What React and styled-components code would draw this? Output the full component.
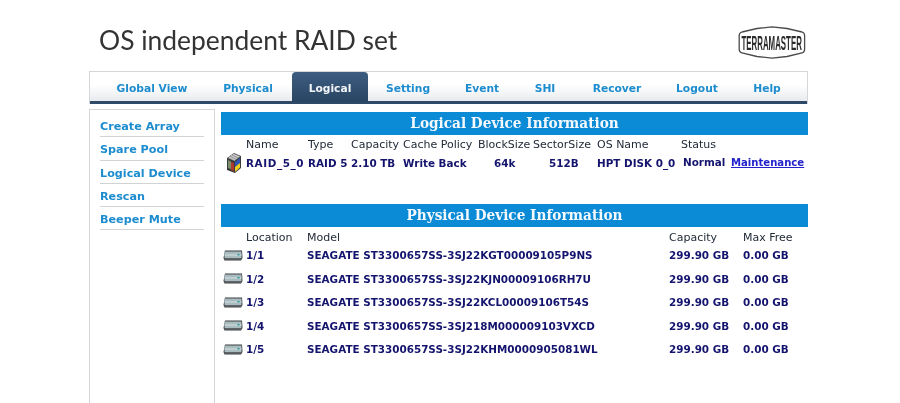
import * as React from 'react';
import styled, { createGlobalStyle } from 'styled-components';

const tabs = [
  { label: 'Global View', width: 104 },
  { label: 'Physical', width: 88 },
  { label: 'Logical', width: 76, active: true },
  { label: 'Setting', width: 80 },
  { label: 'Event', width: 68 },
  { label: 'SHI', width: 58 },
  { label: 'Recover', width: 86 },
  { label: 'Logout', width: 74 },
  { label: 'Help', width: 66 },
];

const menu = ['Create Array', 'Spare Pool', 'Logical Device', 'Rescan', 'Beeper Mute'];

const disks = [
  { loc: '1/1', model: 'SEAGATE ST3300657SS-3SJ22KGT00009105P9NS' },
  { loc: '1/2', model: 'SEAGATE ST3300657SS-3SJ22KJN00009106RH7U' },
  { loc: '1/3', model: 'SEAGATE ST3300657SS-3SJ22KCL00009106T54S' },
  { loc: '1/4', model: 'SEAGATE ST3300657SS-3SJ218M000009103VXCD' },
  { loc: '1/5', model: 'SEAGATE ST3300657SS-3SJ22KHM0000905081WL' },
];

const ArrayIcon = () => (
  <svg width="16" height="22" viewBox="0 0 16 22">
    <path d="M1 6 L8 1 L15 4 L15 16 L9 21 L1 18 Z" fill="#3a3a3a" />
    <path d="M1.5 6 L8 1.5 L14.5 4.2 L8.5 9 Z" fill="#9a9a9a" />
    <path d="M3 5 L9 8 M5 3.6 L11 6.6 M7 2.4 L13 5" stroke="#e4e4e4" strokeWidth="0.8" />
    <path d="M2 8 L5 9.5 L5 17 L2 16 Z" fill="#7d8f6a" />
    <path d="M5 10 L8 11 L8 19 L5 18 Z" fill="#b03a2e" />
    <path d="M9 10 L14 6 L14 11 L9 15 Z" fill="#2f55b8" />
    <path d="M9 15 L14 11 L14 15.5 L9 20 Z" fill="#f0d020" />
  </svg>
);

const DiskIcon = () => (
  <svg width="20" height="11" viewBox="0 0 20 11">
    <path d="M2 0.5 H19 L19.5 8 L18 10.5 H1.5 L0.5 8 Z" fill="#3c3f40" />
    <rect x="1.5" y="1.5" width="17" height="6.5" fill="#a9bcc0" />
    <rect x="1.5" y="4.5" width="17" height="1" fill="#d5e0e2" />
    <rect x="14.5" y="4" width="2" height="1.4" fill="#1f9a9a" />
    <rect x="1.5" y="8.3" width="17" height="1.2" fill="#70767a" />
  </svg>
);

const Logo = () => (
  <svg width="68" height="33" viewBox="0 0 68 33">
    <path
      d="M19 2.5 L34 0.8 L49 2.5 L64 6 Q66.6 6.8 66.6 9.5 V23.5 Q66.6 26 64 27 L49 30.5 L34 32.2 L19 30.5 L4 27 Q1.2 26 1.2 23.5 V9.5 Q1.2 6.8 4 6 Z"
      fill="#fff"
      stroke="#4a4a4a"
      strokeWidth="1.3"
    />
    <text
      transform="translate(3.5,24) scale(0.375,1)"
      fontFamily="'Liberation Sans', sans-serif"
      fontWeight="700"
      fontSize="21"
      fill="#2a2a2a"
    >
      TERRAMASTER
    </text>
  </svg>
);

export default function App() {
  return (
    <Page>
      <GlobalStyle />
      <Header>
        <Title>OS independent RAID set</Title>
        <Logo />
      </Header>
      <TabBar>
        {tabs.map((t) => (
          <Tab key={t.label} $width={t.width} $active={t.active}>
            {t.label}
          </Tab>
        ))}
      </TabBar>
      <Body>
        <Sidebar>
          {menu.map((m) => (
            <MenuItem key={m}>{m}</MenuItem>
          ))}
        </Sidebar>
        <Content>
          <SectionBar>Logical Device Information</SectionBar>
          <LogicalHead>
            <span />
            <span>Name</span>
            <span>Type</span>
            <span>Capacity</span>
            <span>Cache Policy</span>
            <span>BlockSize</span>
            <span>SectorSize</span>
            <span>OS Name</span>
            <span>Status</span>
            <span />
          </LogicalHead>
          <LogicalRow>
            <ArrayIcon />
            <RaidName>RAID_5_0</RaidName>
            <span>RAID 5</span>
            <span>2.10 TB</span>
            <span>Write Back</span>
            <Cell $left={16}>64k</Cell>
            <Cell $left={16}>512B</Cell>
            <span>HPT DISK 0_0</span>
            <Cell $left={2} $raise>Normal</Cell>
            <MaintLink href="#">Maintenance</MaintLink>
          </LogicalRow>
          <SectionBar $gap={30}>Physical Device Information</SectionBar>
          <PhysicalHead>
            <span />
            <span>Location</span>
            <span>Model</span>
            <span>Capacity</span>
            <span>Max Free</span>
          </PhysicalHead>
          {disks.map((d) => (
            <PhysicalRow key={d.loc}>
              <DiskIcon />
              <span>{d.loc}</span>
              <span>{d.model}</span>
              <span>299.90 GB</span>
              <span>0.00 GB</span>
            </PhysicalRow>
          ))}
        </Content>
      </Body>
    </Page>
  );
}

const GlobalStyle = createGlobalStyle`
  html, body { margin: 0; padding: 0; background: #fff; }
`;

const Page = styled.div`
  width: 900px;
  height: 403px;
  overflow: hidden;
  padding-left: 89px;
  box-sizing: border-box;
  font-family: "DejaVu Sans", Verdana, sans-serif;
  filter: blur(0.3px);
`;

const Header = styled.div`
  display: flex;
  align-items: flex-start;
  justify-content: space-between;
  width: 717px;
  height: 71px;
  padding-top: 26px;
  padding-left: 10px;
  box-sizing: border-box;
`;

const Title = styled.h1`
  margin: -3px 0 0;
  font-family: "Lato", "Open Sans", sans-serif;
  font-size: 26.4px;
  font-weight: 400;
  line-height: 34px;
  color: #333;
`;

const TabBar = styled.div`
  display: flex;
  width: 719px;
  height: 33px;
  box-sizing: border-box;
  padding-left: 10px;
  border: 1px solid #d4d6d9;
  border-bottom: 0;
  box-shadow: inset 0 -3px 0 #2f4a68;
  background: linear-gradient(#ffffff 40%, #e8ebee 90%);
`;

const Tab = styled.div`
  flex: none;
  display: flex;
  align-items: center;
  justify-content: center;
  width: ${(p) => p.$width}px;
  height: 30px;
  padding-top: 2px;
  box-sizing: border-box;
  font-size: 10.7px;
  font-weight: 700;
  color: ${(p) => (p.$active ? '#f2f5f8' : '#1c8ccf')};
  background: ${(p) => (p.$active ? 'linear-gradient(#3d5d80, #2a4563)' : 'none')};
  border-radius: ${(p) => (p.$active ? '4px 4px 0 0' : '0')};
`;

const Body = styled.div`
  display: flex;
  margin-top: 5px;
  width: 719px;
  align-items: flex-start;
`;

const Sidebar = styled.div`
  flex: none;
  width: 126px;
  height: 300px;
  box-sizing: border-box;
  padding: 4px 10px 0 10px;
  border: 1px solid #d4d6d9;
  border-bottom: 0;
`;

const MenuItem = styled.div`
  height: 23.3px;
  box-sizing: border-box;
  padding-top: 2px;
  line-height: 22px;
  font-size: 11.2px;
  font-weight: 700;
  color: #1c8ccf;
  white-space: nowrap;
  border-bottom: 1px solid #d0d2d4;
`;

const Content = styled.div`
  flex: none;
  width: 587px;
  margin-left: 6px;
  padding-top: 2.5px;
`;

const SectionBar = styled.div`
  height: 23px;
  margin-top: ${(p) => p.$gap || 0}px;
  background: #0b8ad6;
  color: #f4f9fd;
  text-align: center;
  font-family: "DejaVu Serif Condensed", "DejaVu Serif", serif;
  font-stretch: condensed;
  font-size: 15.2px;
  font-weight: 700;
  line-height: 23px;
`;

const logicalCols = '25px 62px 43px 52px 75px 55px 64px 84px 50px 1fr';

const LogicalHead = styled.div`
  display: grid;
  grid-template-columns: ${logicalCols};
  height: 15px;
  margin-top: 2px;
  align-items: center;
  font-size: 11px;
  color: #222b38;
  white-space: nowrap;
`;

const LogicalRow = styled.div`
  display: grid;
  grid-template-columns: ${logicalCols};
  height: 22px;
  align-items: center;
  font-size: 10.4px;
  font-weight: 700;
  color: #14146e;
  white-space: nowrap;
  & > svg { margin-left: 5px; }
`;

const RaidName = styled.span`
  letter-spacing: 0.6px;
`;

const Cell = styled.span`
  padding-left: ${(p) => p.$left}px;
  margin-bottom: ${(p) => (p.$raise ? 2 : 0)}px;
`;

const MaintLink = styled.a`
  font-size: 10.1px;
  color: #2222cc;
`;

const physicalCols = '25px 61px 362px 74px 1fr';

const PhysicalHead = styled.div`
  display: grid;
  grid-template-columns: ${physicalCols};
  height: 14px;
  margin-top: 4px;
  margin-bottom: -1px;
  align-items: center;
  font-size: 11px;
  color: #222b38;
  white-space: nowrap;
`;

const PhysicalRow = styled.div`
  display: grid;
  grid-template-columns: ${physicalCols};
  height: 23.5px;
  align-items: center;
  font-size: 10.4px;
  font-weight: 700;
  color: #14146e;
  white-space: nowrap;
  & > svg { margin-left: 2px; }
`;
